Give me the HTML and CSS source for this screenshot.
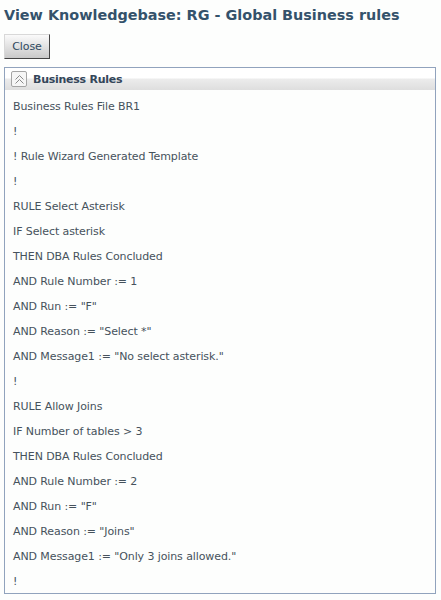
FILE: index.html
```html
<!DOCTYPE html>
<html lang="en">
<head>
  <meta charset="UTF-8">
  <title>View Knowledgebase</title>
  <link rel="stylesheet" href="styles.css">
</head>
<body>
  <h1 class="titulo">View Knowledgebase: RG - Global Business rules</h1>
  <button class="fechar">Close</button>

  <div class="painel">
    <div class="painel-topo">
      <span class="recolher">
        <svg width="13" height="13" viewBox="0 0 13 13" fill="none" stroke="#8a8a8a" stroke-width="1">
          <path d="M2.5 6.5 L6.5 2.5 L10.5 6.5"/>
          <path d="M2.5 10.5 L6.5 6.5 L10.5 10.5"/>
        </svg>
      </span>
      <span class="painel-titulo">Business Rules</span>
    </div>
    <div class="regras">
      <p>Business Rules File BR1</p>
      <p>!</p>
      <p>! Rule Wizard Generated Template</p>
      <p>!</p>
      <p>RULE Select Asterisk</p>
      <p>IF Select asterisk</p>
      <p>THEN DBA Rules Concluded</p>
      <p>AND Rule Number := 1</p>
      <p>AND Run := "F"</p>
      <p>AND Reason := "Select *"</p>
      <p>AND Message1 := "No select asterisk."</p>
      <p>!</p>
      <p>RULE Allow Joins</p>
      <p>IF Number of tables &gt; 3</p>
      <p>THEN DBA Rules Concluded</p>
      <p>AND Rule Number := 2</p>
      <p>AND Run := "F"</p>
      <p>AND Reason := "Joins"</p>
      <p>AND Message1 := "Only 3 joins allowed."</p>
      <p>!</p>
    </div>
  </div>
</body>
</html>
```

FILE: styles.css
```css
* {
  box-sizing: border-box;
}

body {
  margin: 0;
  padding: 6px 4px 0;
  background-color: #fdfefd;
  font-family: "DejaVu Sans", sans-serif;
  font-size: 11px;
  letter-spacing: -0.1px;
  color: #46525c;
}

.titulo {
  margin: 0 0 10px;
  font-size: 14.4px;
  line-height: 18px;
  font-weight: bold;
  letter-spacing: 0;
  color: #34526b;
}

.fechar {
  display: block;
  width: 46px;
  height: 25px;
  padding: 0;
  border: 1px solid #d8d8d8;
  border-right-color: #444;
  border-bottom-color: #444;
  background: linear-gradient(#fafafa, #c9c9c9);
  font-family: inherit;
  font-size: 11px;
  letter-spacing: -0.1px;
  color: #2f4a60;
}

.painel {
  width: 432px;
  height: 527px;
  margin-top: 8px;
  border: 1px solid #91a3bd;
  overflow: hidden;
}

.painel-topo {
  display: flex;
  align-items: center;
  gap: 6px;
  height: 22px;
  padding: 1px 0 1px 6px;
  background: linear-gradient(#fff 0, #fff 10px, #ececec 11px, #dedede 100%);
}

.recolher {
  display: flex;
  align-items: center;
  justify-content: center;
  width: 16px;
  height: 16px;
  border: 1px solid #a5a5a5;
  border-radius: 2px;
  background-color: #f6f6f6;
}

.painel-titulo {
  font-size: 11px;
  font-weight: bold;
  letter-spacing: -0.25px;
  color: #34465a;
}

.regras {
  padding: 4px 8px 0;
}

.regras p {
  margin: 0;
  height: 25px;
  line-height: 25px;
}
```
